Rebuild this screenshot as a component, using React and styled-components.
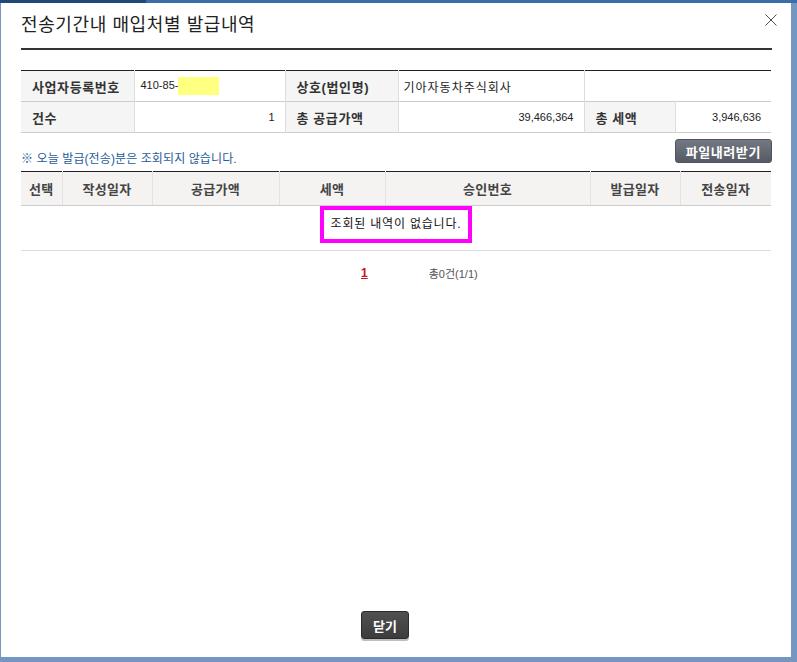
import React from 'react';
import styled, { createGlobalStyle } from 'styled-components';

const GlobalStyle = createGlobalStyle`
    html, body {
        margin: 0;
        padding: 0;
        background: #7496c0;
    }
    body {
        font-family: "Liberation Sans", "Noto Sans CJK KR", sans-serif;
        color: #222;
    }
`;

const Screen = styled.div`
    width: 797px;
    height: 662px;
    background: #7496c0;
    display: flex;
    flex-direction: column;
    overflow: hidden;
`;

const TopStrip = styled.div`
    height: 3px;
    flex: none;
    background: linear-gradient(to right, #1f4a78 0 146px, #3b6ea9 146px);
`;

const Modal = styled.div`
    position: relative;
    margin-left: 1px;
    width: 790px;
    height: 654px;
    box-sizing: border-box;
    padding: 0 19px 18px 20px;
    background: #fff;
    display: flex;
    flex-direction: column;
`;

const Header = styled.div`
    padding: 9px 0 10px;
    border-bottom: 2px solid #333;
`;

const Title = styled.h1`
    margin: 0;
    font-size: 18px;
    line-height: 26px;
    font-weight: normal;
    color: #222;
    letter-spacing: 0.6px;
`;

const CloseIcon = styled.button`
    position: absolute;
    top: 11px;
    right: 14px;
    width: 12px;
    height: 12px;
    padding: 0;
    border: 0;
    background: none;
    cursor: pointer;
    svg {
        display: block;
    }
`;

const InfoTable = styled.table`
    width: 750px;
    margin-top: 20px;
    border-collapse: collapse;
    table-layout: fixed;
    border-top: 1px solid #222;

    tr {
        height: 31px;
        border-bottom: 1px solid #ccc;
    }

    th, td {
        padding: 0;
        border-left: 1px solid #ddd;
        vertical-align: middle;
    }

    th:first-child {
        border-left: 0;
    }

    th {
        background: #f5f5f5;
        text-align: left;
        padding-left: 11px;
        font-size: 13px;
        font-weight: bold;
        color: #333;
        letter-spacing: 0.6px;
    }
`;

const Value = styled.td`
    font-size: 11px;
    color: #222;
    text-align: ${(p) => (p.$right ? 'right' : 'left')};
    padding: ${(p) => (p.$right ? '0 10px 0 0' : '0 0 0 6px')} !important;
`;

const KoValue = styled(Value)`
    font-size: 12px;
    padding-left: 5px !important;
    letter-spacing: 1px;
`;

const Masked = styled.span`
    display: inline-block;
    width: 41px;
    height: 18px;
    vertical-align: middle;
    background: #ffff80;
`;

const ToolRow = styled.div`
    margin-top: 6px;
    display: flex;
    justify-content: space-between;
    align-items: flex-end;
`;

const Notice = styled.p`
    margin: 0 0 -4px;
    font-size: 12px;
    line-height: 16px;
    color: #1d5c98;
    letter-spacing: 0.1px;
`;

const GrayButton = styled.button`
    height: 24px;
    padding: 0 10px;
    border: 1px solid #4e535c;
    border-radius: 3px;
    background: linear-gradient(#737984, #555a64);
    color: #fff;
    font-family: inherit;
    font-size: 13px;
    font-weight: bold;
    letter-spacing: 0.6px;
    cursor: pointer;
`;

const ListTable = styled.table`
    width: 750px;
    margin-top: 8px;
    border-collapse: collapse;
    table-layout: fixed;
    border-top: 1px solid #222;

    th {
        height: 33px;
        padding: 0;
        background: #f4f3f1;
        border-bottom: 1px solid #ccc;
        border-left: 1px solid #e2e2e2;
        font-size: 13px;
        font-weight: bold;
        color: #444;
        letter-spacing: 0.3px;
    }

    th:first-child {
        border-left: 0;
    }
`;

const EmptyCell = styled.td`
    height: 38px;
    padding: 0 0 6px;
    text-align: center;
    vertical-align: top;
    border-bottom: 1px solid #ddd;
`;

const Highlight = styled.span`
    display: inline-block;
    padding: 6px 7px;
    border: 4px solid #ff00ff;
    font-size: 12px;
    line-height: 17px;
    color: #111;
    letter-spacing: 0.8px;
`;

const Pager = styled.div`
    margin-top: 14px;
    padding-left: 340px;
    display: flex;
    align-items: center;
    height: 16px;
`;

const PageNum = styled.a`
    font-size: 12px;
    font-weight: bold;
    color: #c0181c;
    text-decoration: underline;
`;

const Total = styled.span`
    margin-left: 61px;
    font-size: 11px;
    color: #555;
`;

const Footer = styled.div`
    margin-top: auto;
    padding-left: 340px;
`;

const DarkButton = styled.button`
    height: 28px;
    padding: 0 11px;
    border: 1px solid #2b2b2b;
    border-radius: 3px;
    background: linear-gradient(#505050, #3c3c3c);
    box-shadow: 0 2px 0 #bdbdbd;
    color: #fff;
    font-family: inherit;
    font-size: 13px;
    font-weight: bold;
    cursor: pointer;
`;

const listColumns = [
    ['선택', 41],
    ['작성일자', 90],
    ['공급가액', 127],
    ['세액', 106],
    ['승인번호', 205],
    ['발급일자', 90],
    ['전송일자', 91],
];

const App = () => {
    return (
        <>
            <GlobalStyle />
            <Screen>
                <TopStrip />
                <Modal>
                    <Header>
                        <Title>전송기간내 매입처별 발급내역</Title>
                    </Header>
                    <CloseIcon aria-label="닫기">
                        <svg width="12" height="12" viewBox="0 0 12 12">
                            <path d="M0.5 0.5 L11.5 11.5 M11.5 0.5 L0.5 11.5" stroke="#4a5060" strokeWidth="1" />
                        </svg>
                    </CloseIcon>

                    <InfoTable>
                        <colgroup>
                            <col style={{ width: 113 }} />
                            <col style={{ width: 151 }} />
                            <col style={{ width: 113 }} />
                            <col style={{ width: 186 }} />
                            <col style={{ width: 91 }} />
                            <col style={{ width: 96 }} />
                        </colgroup>
                        <tbody>
                            <tr>
                                <th>사업자등록번호</th>
                                <Value>
                                    410-85-<Masked />
                                </Value>
                                <th>상호(법인명)</th>
                                <KoValue>기아자동차주식회사</KoValue>
                                <Value colSpan={2} />
                            </tr>
                            <tr>
                                <th>건수</th>
                                <Value $right>1</Value>
                                <th>총 공급가액</th>
                                <Value $right>39,466,364</Value>
                                <th>총 세액</th>
                                <Value $right>3,946,636</Value>
                            </tr>
                        </tbody>
                    </InfoTable>

                    <ToolRow>
                        <Notice>※ 오늘 발급(전송)분은 조회되지 않습니다.</Notice>
                        <GrayButton>파일내려받기</GrayButton>
                    </ToolRow>

                    <ListTable>
                        <colgroup>
                            {listColumns.map(([name, w]) => (
                                <col key={name} style={{ width: w }} />
                            ))}
                        </colgroup>
                        <thead>
                            <tr>
                                {listColumns.map(([name]) => (
                                    <th key={name}>{name}</th>
                                ))}
                            </tr>
                        </thead>
                        <tbody>
                            <tr>
                                <EmptyCell colSpan={7}>
                                    <Highlight>조회된 내역이 없습니다.</Highlight>
                                </EmptyCell>
                            </tr>
                        </tbody>
                    </ListTable>

                    <Pager>
                        <PageNum>1</PageNum>
                        <Total>총0건(1/1)</Total>
                    </Pager>

                    <Footer>
                        <DarkButton>닫기</DarkButton>
                    </Footer>
                </Modal>
            </Screen>
        </>
    );
};

export default App;
